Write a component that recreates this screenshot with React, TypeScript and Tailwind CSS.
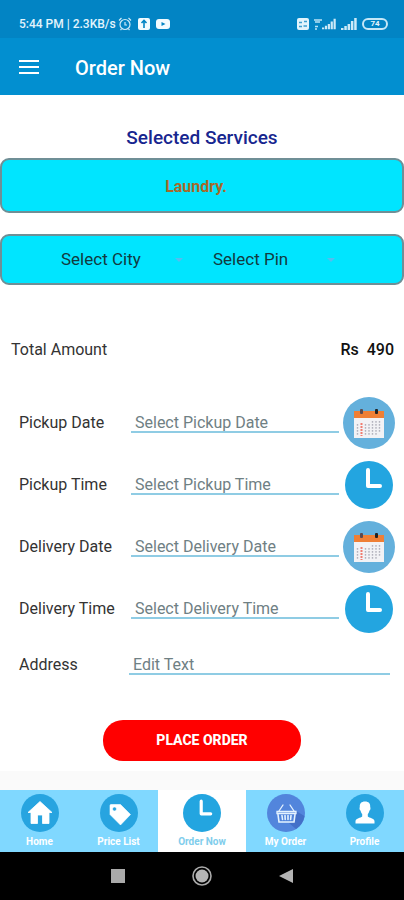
import React, { useState } from "react";

type Tab = "home" | "price" | "order" | "myorder" | "profile";

// ---------- Icons ----------

const ClockIcon = ({ className }: { className: string }) => (
  <svg viewBox="0 0 48 48" className={className} aria-hidden="true">
    <circle cx="24" cy="24" r="24" fill="#23a5e0" />
    <path d="M23 9v16h12" fill="none" stroke="#fff" strokeWidth="4" strokeLinecap="round" strokeLinejoin="round" />
  </svg>
);

const CalendarIcon = ({ className }: { className: string }) => (
  <svg viewBox="0 0 52 52" className={className} aria-hidden="true">
    <circle cx="26" cy="26" r="26" fill="#64b0dc" />
    <rect x="11" y="14" width="30" height="27" fill="#f2f2f5" />
    <path d="M11 14h30v7H11z" fill="#ef7f35" />
    <rect x="17" y="12" width="3" height="5" rx="1" fill="#5b4a50" />
    <rect x="32" y="12" width="3" height="5" rx="1" fill="#222" />
    <g stroke="#b4b4be" strokeWidth="1.4" strokeDasharray="1.8 1.2">
      <path d="M14.5 27v12M22.5 27v12M26 27v12M29.5 24v15M33 24v15M36.5 24v12" />
    </g>
    <path d="M18.5 26v13" stroke="#f07c70" strokeWidth="2" strokeDasharray="2 1" />
  </svg>
);

const HomeIcon = ({ className }: { className: string }) => (
  <svg viewBox="0 0 38 38" className={className} aria-hidden="true">
    <circle cx="19" cy="19" r="19" fill="#27a4e0" />
    <path
      d="M19 7.5 31 18.5h-3v11h-6.500v-8.500h-5v8.500H10v-11H7z"
      fill="#fff"
      stroke="#fff"
      strokeWidth=".8"
      strokeLinejoin="round"
    />
  </svg>
);

const TagIcon = ({ className }: { className: string }) => (
  <svg viewBox="0 0 38 38" className={className} aria-hidden="true">
    <circle cx="19" cy="19" r="19" fill="#27a4e0" />
    <path
      fillRule="evenodd"
      d="M10 11.500q0-1 1-1h9.500L30.500 20.500 20.500 31 10 20.500zM14.500 13a2 2 0 1 0 .01 0z"
      fill="#fff"
      stroke="#fff"
      strokeWidth=".6"
      strokeLinejoin="round"
    />
  </svg>
);

const BasketIcon = ({ className }: { className: string }) => (
  <svg viewBox="0 0 38 38" className={className} aria-hidden="true">
    <circle cx="19" cy="19" r="19" fill="#5285dc" />
    <path d="M29 17l8.500 5A19 19 0 0 1 29 35l-7-6 5-2z" fill="#4370c8" />
    <g fill="none" stroke="#e5f3ff" strokeLinecap="round">
      <path d="m12 17 4-6M27 17l-4-6" strokeWidth="1.3" />
      <path d="M10 17.500h19v2H10z" strokeWidth="1.3" />
      <path d="M11 20.500 12 28h15L28 20.500M15 21.500l.5 4M18 21.500l.2 4M21 21.500v4M24 21.500l-.4 4" strokeWidth="1.6" />
    </g>
  </svg>
);

const PersonIcon = ({ className }: { className: string }) => (
  <svg viewBox="0 0 38 38" className={className} aria-hidden="true">
    <circle cx="19" cy="19" r="19" fill="#27a4e0" />
    <path
      d="M19 7.500c3.800 0 5.500 2.200 5.200 5.500.6 1.500.2 3-.8 3.700-.3 1.600-1 2.500-1.600 3.300v2.500c1.500 1.500 6.200 1.700 6.700 4.500v2.500h-19V27c.5-2.800 5.200-3 6.700-4.500V20c-.6-.8-1.300-1.700-1.600-3.300-1-.7-1.400-2.200-.8-3.700-.3-3.300 1.400-5.500 5.200-5.500z"
      fill="#fff"
    />
  </svg>
);

const SignalBars = ({ className }: { className: string }) => (
  <svg viewBox="0 0 16 12" className={className} aria-hidden="true" fill="#cdeaf8">
    <path d="M0 10h2.500v2H0zM3.300 8h2.500v4H3.300zM6.600 6h2.500v6H6.600zM9.900 3h2.500v9H9.900zM13.200 0h2.500v12h-2.500z" />
  </svg>
);

// ---------- Bars ----------

const StatusBar = () => (
  <div className="flex h-[38px] items-end justify-between bg-[#0284c4] pr-4 pl-[19px] pb-1 text-[#e2f4fc]">
    <div className="flex h-5 items-center gap-[6px]">
      <span className="text-[12px] font-medium whitespace-nowrap">5:44 PM | 2.3KB/s</span>
      <svg viewBox="0 0 14 14" className="-ml-1 size-[14px]" fill="none" stroke="#cdeaf8" strokeWidth="1.2" aria-hidden="true">
        <circle cx="7" cy="7.5" r="5" />
        <path d="M7 5v3h2M1 3.500 3.500 1M13 3.500 10.500 1M3.500 12 2.500 13M10.500 12l1 1" />
      </svg>
      <svg viewBox="0 0 12 12" className="size-3" aria-hidden="true">
        <rect width="12" height="12" rx="2" fill="#f2fbff" />
        <path d="M6 10V3M3.500 5 6 2.500 8.500 5" stroke="#0284c4" strokeWidth="1.6" fill="none" />
      </svg>
      <svg viewBox="0 0 14 10" className="h-[10px] w-[14px]" aria-hidden="true">
        <rect width="14" height="10" rx="3" fill="#f2fbff" />
        <path d="m5.500 3 4 2-4 2z" fill="#0284c4" />
      </svg>
    </div>
    <div className="flex h-5 items-center gap-[5px]">
      <svg viewBox="0 0 12 12" className="size-3" aria-hidden="true">
        <rect width="12" height="12" rx="2" fill="#e2f4fc" />
        <path d="M2 4.500h3M7 3.500h3M2 8.500h3M6.500 8h3.500" stroke="#3c9fd0" strokeWidth="1.5" />
      </svg>
      <div className="flex items-center">
        <svg viewBox="0 0 8 12" className="h-3 w-2" aria-hidden="true">
          <path d="M0 2h8M1 4h5M1 8.500h3M1 11h2" stroke="#b9e2f5" strokeWidth="1.5" />
        </svg>
        <SignalBars className="h-3 w-[14px]" />
      </div>
      <SignalBars className="h-3 w-4" />
      <span className="flex h-3 w-[26px] items-center justify-center rounded-full border-2 border-[#c5e7f7] text-[8px] font-bold">
        74
      </span>
    </div>
  </div>
);

const AppBar = () => (
  <header className="flex h-[57px] items-center bg-[#028fd0] pl-[19px] text-white">
    <button type="button" aria-label="Open menu" className="flex w-5 flex-col gap-1">
      <span className="h-[2px] bg-white" />
      <span className="h-[2px] bg-white" />
      <span className="h-[2px] bg-white" />
    </button>
    <h1 className="ml-9 pt-[2px] text-[20px] leading-6 font-medium">Order Now</h1>
  </header>
);

// ---------- Form ----------

type FieldProps = {
  id: string;
  label: string;
  placeholder: string;
  kind: "date" | "time";
};

const PickerField = ({ id, label, placeholder, kind }: FieldProps) => (
  <div className="flex h-[62px] items-center pr-[9px] pl-[19px]">
    <label htmlFor={id} className="w-28 text-[16px] text-[#333]">
      {label}
    </label>
    <input
      id={id}
      type="text"
      placeholder={placeholder}
      className="h-5 min-w-0 flex-1 border-b-2 border-[#8fcce4] pl-1 text-[16px] leading-[18px] text-[#333] outline-none placeholder:text-[#6f8084]"
    />
    <button type="button" aria-label={placeholder} className="ml-1 flex w-[52px] justify-center">
      {kind === "date" ? <CalendarIcon className="size-[52px]" /> : <ClockIcon className="size-12" />}
    </button>
  </div>
);

const fields: FieldProps[] = [
  { id: "pickup-date", label: "Pickup Date", placeholder: "Select Pickup Date", kind: "date" },
  { id: "pickup-time", label: "Pickup Time", placeholder: "Select Pickup Time", kind: "time" },
  { id: "delivery-date", label: "Delivery Date", placeholder: "Select Delivery Date", kind: "date" },
  { id: "delivery-time", label: "Delivery Time", placeholder: "Select Delivery Time", kind: "time" },
];

const Dropdown = ({ label }: { label: string }) => (
  <div className="flex w-[122px] items-center justify-between">
    <select aria-label={label} className="appearance-none bg-transparent text-[17px] text-[#123a40] outline-none">
      <option>{label}</option>
    </select>
    <svg viewBox="0 0 8 4" className="h-1 w-2" aria-hidden="true">
      <path d="M0 0h8L4 4z" fill="#55bdf0" />
    </svg>
  </div>
);

const OrderForm = () => (
  <form className="bg-white pb-[10px]" onSubmit={(e) => e.preventDefault()}>
    <h2 className="pt-[31px] text-center text-[19px] leading-6 font-medium text-[#17268f]">Selected Services</h2>
    <div className="mt-2 flex h-[55px] items-center justify-center rounded-[9px] border-2 border-[#6f8f96] bg-[#00e5ff] pr-3 pt-[2px] text-[16px] font-bold text-[#a9682a]">
      Laundry.
    </div>
    <div className="mt-[21px] flex h-[51px] items-center justify-center gap-[30px] rounded-[9px] border-2 border-[#6f8f96] bg-[#00e5ff] pr-2">
      <Dropdown label="Select City" />
      <Dropdown label="Select Pin" />
    </div>

    <div className="mt-[53px] mb-[30px] flex h-6 items-center justify-between pr-[10px] pl-[11px] text-[16px]">
      <span className="text-[#333]">Total Amount</span>
      <span className="font-medium whitespace-pre text-[#111]">Rs  490</span>
    </div>

    {fields.map((field) => (
      <PickerField key={field.id} {...field} />
    ))}

    <div className="flex h-[50px] items-center pr-[14px] pl-[19px]">
      <label htmlFor="address" className="w-[110px] text-[16px] text-[#333]">
        Address
      </label>
      <input
        id="address"
        type="text"
        placeholder="Edit Text"
        className="h-5 min-w-0 flex-1 border-b-2 border-[#8fcce4] pl-1 text-[16px] leading-[18px] text-[#333] outline-none placeholder:text-[#6f8084]"
      />
    </div>

    <button
      type="submit"
      className="mx-auto mt-[30px] block h-[41px] w-[198px] rounded-[20px] bg-[#ff0000] text-[14px] font-extrabold text-white"
    >
      PLACE ORDER
    </button>
  </form>
);

// ---------- Bottom navigation ----------

const tabs: { id: Tab; label: string; Icon: React.FC<{ className: string }> }[] = [
  { id: "home", label: "Home", Icon: HomeIcon },
  { id: "price", label: "Price List", Icon: TagIcon },
  { id: "order", label: "Order Now", Icon: ClockIcon },
  { id: "myorder", label: "My Order", Icon: BasketIcon },
  { id: "profile", label: "Profile", Icon: PersonIcon },
];

const SystemBar = () => (
  <div className="flex h-12 items-center justify-center gap-[67px] bg-black">
    <button type="button" aria-label="Recent apps" className="size-[14px] bg-[#aaa]" />
    <button type="button" aria-label="Home screen">
      <svg viewBox="0 0 20 20" className="size-5" aria-hidden="true">
        <circle cx="10" cy="10" r="9" fill="none" stroke="#aaa" strokeWidth="1.6" />
        <circle cx="10" cy="10" r="6.5" fill="#b4b4b4" />
      </svg>
    </button>
    <button type="button" aria-label="Back">
      <svg viewBox="0 0 14 14" className="size-[14px]" aria-hidden="true">
        <path d="M14 0v14L0 7z" fill="#b4b4b4" />
      </svg>
    </button>
  </div>
);

export default function App() {
  const [tab, setTab] = useState<Tab>("order");

  return (
    <div className="flex min-h-screen flex-col bg-[#fafafa] font-[Roboto,sans-serif]">
      <StatusBar />
      <AppBar />
      <main className="flex-1">
        <OrderForm />
      </main>
      <nav className="flex h-[62px] bg-[#80d8ff]">
        {tabs.map(({ id, label, Icon }) => (
          <button
            key={id}
            type="button"
            onClick={() => setTab(id)}
            className={`flex flex-col items-center pt-1 text-[10px] leading-4 font-bold ${
              tab === id ? "w-[88px] bg-white text-[#80cdec]" : "flex-1 text-white"
            }`}
          >
            <Icon className="size-[38px]" />
            <span className="mt-[2px]">{label}</span>
          </button>
        ))}
      </nav>
      <SystemBar />
    </div>
  );
}
